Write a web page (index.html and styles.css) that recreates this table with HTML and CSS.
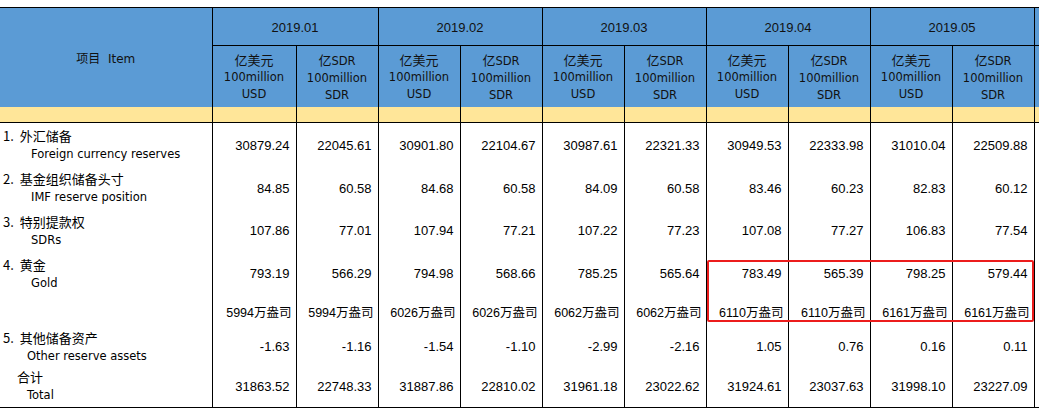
FILE: index.html
```html
<!DOCTYPE html>
<html lang="zh-CN">
<head>
<meta charset="utf-8">
<title>官方储备资产</title>
<link rel="stylesheet" href="styles.css">
</head>
<body>
<div class="wrap">
<table class="res">
<colgroup>
<col class="c-item"><col class="c-first"><col class="c-num"><col class="c-num"><col class="c-num"><col class="c-num"><col class="c-num"><col class="c-num"><col class="c-num"><col class="c-num"><col class="c-num"><col class="c-num">
</colgroup>
<thead>
<tr class="r-month">
<th rowspan="2" class="item-h">项目&nbsp;&nbsp;Item</th>
<th colspan="2">2019.01</th>
<th colspan="2">2019.02</th>
<th colspan="2">2019.03</th>
<th colspan="2">2019.04</th>
<th colspan="2">2019.05</th>
<th></th>
</tr>
<tr class="r-unit">
<th>亿美元<br><span class="en-h">100million</span><br><span class="en-h">USD</span></th>
<th>亿<span class="en-h">SDR</span><br><span class="en-h">100million</span><br><span class="en-h">SDR</span></th>
<th>亿美元<br><span class="en-h">100million</span><br><span class="en-h">USD</span></th>
<th>亿<span class="en-h">SDR</span><br><span class="en-h">100million</span><br><span class="en-h">SDR</span></th>
<th>亿美元<br><span class="en-h">100million</span><br><span class="en-h">USD</span></th>
<th>亿<span class="en-h">SDR</span><br><span class="en-h">100million</span><br><span class="en-h">SDR</span></th>
<th>亿美元<br><span class="en-h">100million</span><br><span class="en-h">USD</span></th>
<th>亿<span class="en-h">SDR</span><br><span class="en-h">100million</span><br><span class="en-h">SDR</span></th>
<th>亿美元<br><span class="en-h">100million</span><br><span class="en-h">USD</span></th>
<th>亿<span class="en-h">SDR</span><br><span class="en-h">100million</span><br><span class="en-h">SDR</span></th>
<th></th>
</tr>
<tr class="r-band">
<td></td><td></td><td></td><td></td><td></td><td></td><td></td><td></td><td></td><td></td><td></td><td></td>
</tr>
</thead>
<tbody>
<tr class="r-1">
<td class="lbl"><div class="zh">1.&nbsp;&nbsp;外汇储备</div><div class="en">Foreign currency reserves</div></td>
<td>30879.24</td><td>22045.61</td><td>30901.80</td><td>22104.67</td><td>30987.61</td><td>22321.33</td><td>30949.53</td><td>22333.98</td><td>31010.04</td><td>22509.88</td><td></td>
</tr>
<tr class="r-2">
<td class="lbl"><div class="zh">2.&nbsp;&nbsp;基金组织储备头寸</div><div class="en">IMF reserve position</div></td>
<td>84.85</td><td>60.58</td><td>84.68</td><td>60.58</td><td>84.09</td><td>60.58</td><td>83.46</td><td>60.23</td><td>82.83</td><td>60.12</td><td></td>
</tr>
<tr class="r-3">
<td class="lbl"><div class="zh">3.&nbsp;&nbsp;特别提款权</div><div class="en">SDRs</div></td>
<td>107.86</td><td>77.01</td><td>107.94</td><td>77.21</td><td>107.22</td><td>77.23</td><td>107.08</td><td>77.27</td><td>106.83</td><td>77.54</td><td></td>
</tr>
<tr class="r-4">
<td class="lbl"><div class="zh">4.&nbsp;&nbsp;黄金</div><div class="en">Gold</div></td>
<td>793.19</td><td>566.29</td><td>794.98</td><td>568.66</td><td>785.25</td><td>565.64</td><td>783.49</td><td>565.39</td><td>798.25</td><td>579.44</td><td></td>
</tr>
<tr class="r-4b">
<td class="lbl"></td>
<td class="oz">5994万盎司</td><td class="oz">5994万盎司</td><td class="oz">6026万盎司</td><td class="oz">6026万盎司</td><td class="oz">6062万盎司</td><td class="oz">6062万盎司</td><td class="oz">6110万盎司</td><td class="oz">6110万盎司</td><td class="oz">6161万盎司</td><td class="oz">6161万盎司</td><td></td>
</tr>
<tr class="r-5">
<td class="lbl"><div class="zh">5.&nbsp;&nbsp;其他储备资产</div><div class="en en-other">Other reserve assets</div></td>
<td>-1.63</td><td>-1.16</td><td>-1.54</td><td>-1.10</td><td>-2.99</td><td>-2.16</td><td>1.05</td><td>0.76</td><td>0.16</td><td>0.11</td><td></td>
</tr>
<tr class="r-total">
<td class="lbl"><div class="zh zh-total">合计</div><div class="en en-other">Total</div></td>
<td>31863.52</td><td>22748.33</td><td>31887.86</td><td>22810.02</td><td>31961.18</td><td>23022.62</td><td>31924.61</td><td>23037.63</td><td>31998.10</td><td>23227.09</td><td></td>
</tr>
</tbody>
</table>
<div class="highlight"></div>
</div>
</body>
</html>
```
FILE: styles.css
```css
html, body {
  margin: 0;
  padding: 0;
  background: #ffffff;
  overflow: hidden;
}
body {
  padding-top: 7px;
  font-family: "Liberation Sans", Arial, "Noto Sans CJK SC", sans-serif;
  color: #000;
}
.wrap {
  position: relative;
  width: 1039px;
  overflow: hidden;
}
.res {
  border-collapse: collapse;
  table-layout: fixed;
  width: 1115px;
}
.c-item { width: 212px; }
.c-first { width: 84px; }
.c-num { width: 82px; }

.res th, .res td {
  padding: 0;
  border-left: 1px solid #000;
  border-right: 1px solid #000;
}
.res tr > :first-child { border-left: none; }

.res thead th {
  background: #5b9bd5;
  font-weight: normal;
  text-align: center;
  vertical-align: middle;
  color: #111;
}
.res .r-month th {
  border-top: 1px solid #000;
  border-bottom: 1px solid #000;
  height: 36px;
  font-size: 13px;
  font-family: "Liberation Sans", Arial, sans-serif;
  padding-top: 1px;
}
.res .r-month th.item-h {
  border-bottom: none;
  font-family: "DejaVu Sans", "Noto Sans CJK SC", sans-serif;
  font-size: 12px;
  padding-bottom: 2px;
}
.res .r-unit th {
  height: 60px;
  font-family: "Noto Sans CJK SC", sans-serif;
  font-size: 13px;
  line-height: 16px;
  padding-top: 1px;
}
.en-h {
  font-family: "DejaVu Sans", sans-serif;
  font-size: 11.5px;
}
.res .r-band td {
  background: #ffe699;
  height: 15px;
  border-bottom: 1px solid #000;
}

.res tbody td {
  text-align: right;
  vertical-align: middle;
  padding-right: 6px;
  font-size: 13px;
  font-family: "Liberation Sans", Arial, sans-serif;
}
.res tbody td.lbl {
  text-align: left;
  padding: 0 0 0 3px;
}
.zh {
  font-family: "Noto Sans CJK SC", sans-serif;
  font-size: 13px;
  line-height: 18px;
}
.en {
  font-family: "DejaVu Sans", sans-serif;
  font-size: 11.5px;
  line-height: 18px;
  padding-left: 28px;
}
.en-other { padding-left: 24px; }
.zh-total { padding-left: 14px; }
.res tbody td.oz {
  font-family: "Liberation Sans", Arial, "Noto Sans CJK SC", sans-serif;
  font-size: 12.5px;
  padding-right: 4px;
}

.res .r-1 td { height: 44px; }
.res .r-2 td { height: 42px; }
.res .r-3 td { height: 43px; }
.res .r-4 td { height: 43px; }
.res .r-4b td { height: 33px; }
.res .r-5 td { height: 37px; }
.res .r-total td {
  height: 42px;
  border-bottom: 1px solid #000;
}

.highlight {
  position: absolute;
  left: 707px;
  top: 253px;
  width: 323px;
  height: 58px;
  border: 2px solid #ec1c1c;
  border-radius: 2px;
}
```
